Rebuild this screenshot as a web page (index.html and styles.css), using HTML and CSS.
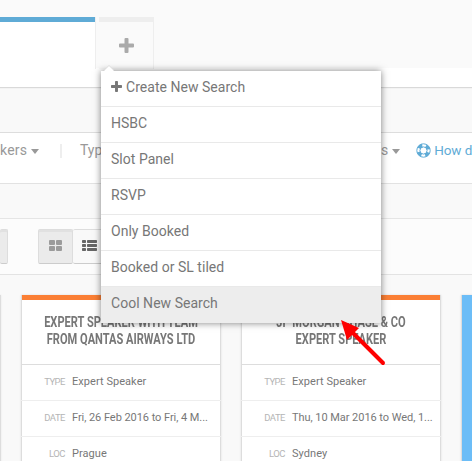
FILE: index.html
```
<!DOCTYPE html>
<html lang="en">
<head>
<meta charset="UTF-8">
<meta name="viewport" content="width=device-width, initial-scale=1.0">
<title>Saved searches</title>
<link rel="stylesheet" href="styles.css">
</head>
<body>
<div class="page">
    <div class="tabs">
        <div class="tab-active"></div>
        <div class="tab-add">
            <svg class="plus" width="15" height="15" viewBox="0 0 15 15"><path d="M5.500 1q0-1 1-1h2q1 0 1 1v4.500H14q1 0 1 1v2q0 1-1 1H9.500V14q0 1-1 1h-2q-1 0-1-1V9.500H1q-1 0-1-1v-2q0-1 1-1h4.500z"/></svg>
        </div>
    </div>
    <div class="band"></div>

    <div class="filters">
        <div class="filters-left">
            <span class="kers">kers</span><i class="caret"></i>
            <span class="divider"></span>
            <span>Typ</span>
        </div>
        <div class="filters-right">
            <span>s</span><i class="caret"></i>
            <svg class="help-icon" width="15" height="15" viewBox="0 0 15 15">
                <circle cx="7.500" cy="7.500" r="5.100" fill="none" stroke="#5fabd6" stroke-width="3.600" stroke-dasharray="4.200 3.810" stroke-dashoffset="-1.900"/>
                <circle cx="7.500" cy="7.500" r="6.700" fill="none" stroke="#5fabd6"/>
                <circle cx="7.500" cy="7.500" r="3.600" fill="none" stroke="#5fabd6"/>
            </svg>
            <span class="help">How d</span>
        </div>
    </div>
    <div class="band band-small"></div>

    <div class="toolbar">
        <div class="btn btn-cut"></div>
        <div class="btn btn-grid">
            <svg width="13" height="11" viewBox="0 0 13 11" fill="#9b9b9b"><rect width="6" height="5" rx="1"/><rect x="7" width="6" height="5" rx="1"/><rect y="6" width="6" height="5" rx="1"/><rect x="7" y="6" width="6" height="5" rx="1"/></svg>
        </div>
        <div class="btn btn-list">
            <svg width="15" height="11" viewBox="0 0 15 11" fill="#666"><rect width="4" height="3" rx=".7"/><rect x="5" width="10" height="3" rx=".7"/><rect y="4" width="4" height="3" rx=".7"/><rect x="5" y="4" width="10" height="3" rx=".7"/><rect y="8" width="4" height="3" rx=".7"/><rect x="5" y="8" width="10" height="3" rx=".7"/></svg>
        </div>
    </div>

    <div class="cards">
        <div class="card card-first"></div>
        <div class="card">
            <h3 class="title"><span>EXPERT SPEAKER WITH TEAM</span><span>FROM QANTAS AIRWAYS LTD</span></h3>
            <div class="row"><span class="label">TYPE</span><span class="value">Expert Speaker</span></div>
            <div class="row"><span class="label">DATE</span><span class="value value-tight">Fri, 26 Feb 2016 to Fri, 4 M...</span></div>
            <div class="row"><span class="label">LOC</span><span class="value">Prague</span></div>
        </div>
        <div class="card">
            <h3 class="title"><span>JP MORGAN CHASE &amp; CO</span><span>EXPERT SPEAKER</span></h3>
            <div class="row"><span class="label">TYPE</span><span class="value">Expert Speaker</span></div>
            <div class="row"><span class="label">DATE</span><span class="value value-tight">Thu, 10 Mar 2016 to Wed, 1...</span></div>
            <div class="row"><span class="label">LOC</span><span class="value">Sydney</span></div>
        </div>
        <div class="card card-blue"></div>
    </div>

    <ul class="menu">
        <li><svg class="plus" width="11" height="11" viewBox="0 0 15 15"><path d="M5.500 1q0-1 1-1h2q1 0 1 1v4.500H14q1 0 1 1v2q0 1-1 1H9.500V14q0 1-1 1h-2q-1 0-1-1V9.500H1q-1 0-1-1v-2q0-1 1-1h4.500z"/></svg>Create New Search</li>
        <li>HSBC</li>
        <li>Slot Panel</li>
        <li>RSVP</li>
        <li>Only Booked</li>
        <li>Booked or SL tiled</li>
        <li class="selected">Cool New Search</li>
    </ul>

    <svg class="arrow" width="48" height="48" viewBox="0 0 48 48">
        <path d="M12 12L43 43" stroke="#fe0000" stroke-width="4" stroke-linecap="round"/>
        <path d="M1 0L19 8L7 20z" fill="#fe0000"/>
    </svg>
</div>
</body>
</html>
```
FILE: styles.css
```
* {
    box-sizing: border-box;
}

body {
    margin: 0;
    font-family: Roboto, "Liberation Sans", sans-serif;
    font-size: 14px;
    color: #777;
    background: #f9f9f9;
}

.page {
    position: relative;
    width: 472px;
    height: 461px;
    overflow: hidden;
}

/* tabs */
.tabs {
    display: flex;
    height: 88px;
    padding-top: 17px;
    background: linear-gradient(#fafafa 68px, #fff 68px);
    border-bottom: 1px solid #d9d9d9;
}

.tab-active {
    width: 95px;
    border-top: 5px solid #5fabd6;
    background: #fff;
}

.tab-add {
    display: flex;
    justify-content: center;
    width: 59px;
    height: 52px;
    padding-top: 21px;
    padding-left: 3px;
    border-left: 1px solid #eee;
    border-right: 1px solid #eee;
    background: linear-gradient(#eee 5px, #fafafa 5px) 3px 0 no-repeat;
}

.tab-add .plus {
    fill: #aaa;
}

.band {
    height: 45px;
    background: #f9f9f9;
    border-top: 1px solid #f3f3f3;
    border-bottom: 1px solid #ddd;
}

.band-small {
    height: 35px;
    border-top: 0;
    border-bottom-color: #e5e5e5;
}

/* filters */
.filters {
    display: flex;
    height: 51px;
    padding-top: 9px;
    background: #fff;
    border-bottom: 1px solid #e2e2e2;
    color: #999;
    line-height: 17px;
}

.filters-left {
    display: flex;
    flex: none;
    width: 381px;
}

.filters-right {
    display: flex;
    flex: none;
    white-space: nowrap;
}

.kers {
    width: 31px;
    letter-spacing: .2px;
}

.caret {
    width: 8px;
    height: 5px;
    margin-top: 7px;
    border: 4px solid transparent;
    border-top: 5px solid #999;
    border-bottom: 0;
}

.divider {
    width: 2px;
    height: 14px;
    margin: 2px 18px 0 21px;
    background: #eee;
}

.filters-right .caret {
    margin-left: 4px;
}

.help-icon {
    margin: 1px 3px 0 16px;
}

.help {
    color: #5fabd6;
    font-size: 13.5px;
    letter-spacing: -.1px;
}

/* toolbar */
.toolbar {
    display: flex;
    height: 56px;
    padding-top: 10px;
    background: #fcfcfc;
    border-bottom: 1px solid #e3e3e3;
}

.btn {
    display: flex;
    align-items: center;
    justify-content: center;
    width: 35px;
    height: 35px;
    border: 1px solid #ddd;
    border-bottom-color: #ccc;
    border-radius: 2px;
    background: #ebebeb;
    box-shadow: inset 0 2px #e1e1e1;
}

.btn svg {
    margin-top: -2px;
}

.btn-cut {
    width: 8px;
    margin-right: 30px;
    border-left: 0;
}

.btn-list {
    border-left: 0;
    background: #f9f9f9;
    box-shadow: none;
}

.btn-list svg {
    margin-right: 1px;
}

/* cards */
.cards {
    display: flex;
    gap: 20px;
    padding-top: 20px;
}

.card {
    flex: none;
    width: 200px;
    height: 200px;
    background: linear-gradient(#fb7f35, #fb7f35) 0 0 / 100% 5px no-repeat #fff;
    box-shadow: inset 1px 0 #ddd, inset -1px 0 #ddd, 0 0 2px #ddd;
}

.card-first {
    width: 1px;
}

.card-blue {
    background: #6cbdf7;
}

.title {
    height: 70px;
    margin: 0;
    padding-top: 19px;
    border-bottom: 1px solid #ddd;
    font-size: 15.5px;
    line-height: 17px;
    font-weight: 700;
    text-align: center;
}

.title span {
    display: block;
    white-space: nowrap;
    margin: 0 -20px;
    transform: scaleX(.715);
}

.row {
    display: flex;
    height: 36px;
    padding-left: 1px;
    border-bottom: 1px solid #eee;
    line-height: 33px;
    white-space: nowrap;
}

.label {
    width: 43px;
    margin-right: 7px;
    color: #b5b5b5;
    font-size: 9.5px;
    line-height: 34px;
    letter-spacing: -.5px;
    text-align: right;
}

.value {
    font-size: 11px;
    letter-spacing: .05px;
}

.value-tight {
    letter-spacing: -.05px;
}

/* saved search menu */
.menu {
    position: absolute;
    left: 101px;
    top: 71px;
    width: 280px;
    height: 252px;
    margin: 0;
    padding: 0;
    list-style: none;
    background: #fff;
    box-shadow: 0 0 7px rgba(0, 0, 0, .5);
}

.menu::before {
    content: "";
    position: absolute;
    left: 3px;
    top: -5px;
    border: 5px solid transparent;
    border-top: 0;
    border-bottom-color: #fff;
    filter: drop-shadow(0 -1px 0 #ddd);
}

.menu li {
    height: 36px;
    padding-left: 10px;
    border-bottom: 1px solid #e9e9e9;
    line-height: 33px;
    letter-spacing: .03px;
}

.menu .plus {
    margin-right: 4px;
    fill: #777;
}

.menu .selected {
    background: #ededed;
    border: 0;
}

.arrow {
    position: absolute;
    left: 340px;
    top: 320px;
}
```
